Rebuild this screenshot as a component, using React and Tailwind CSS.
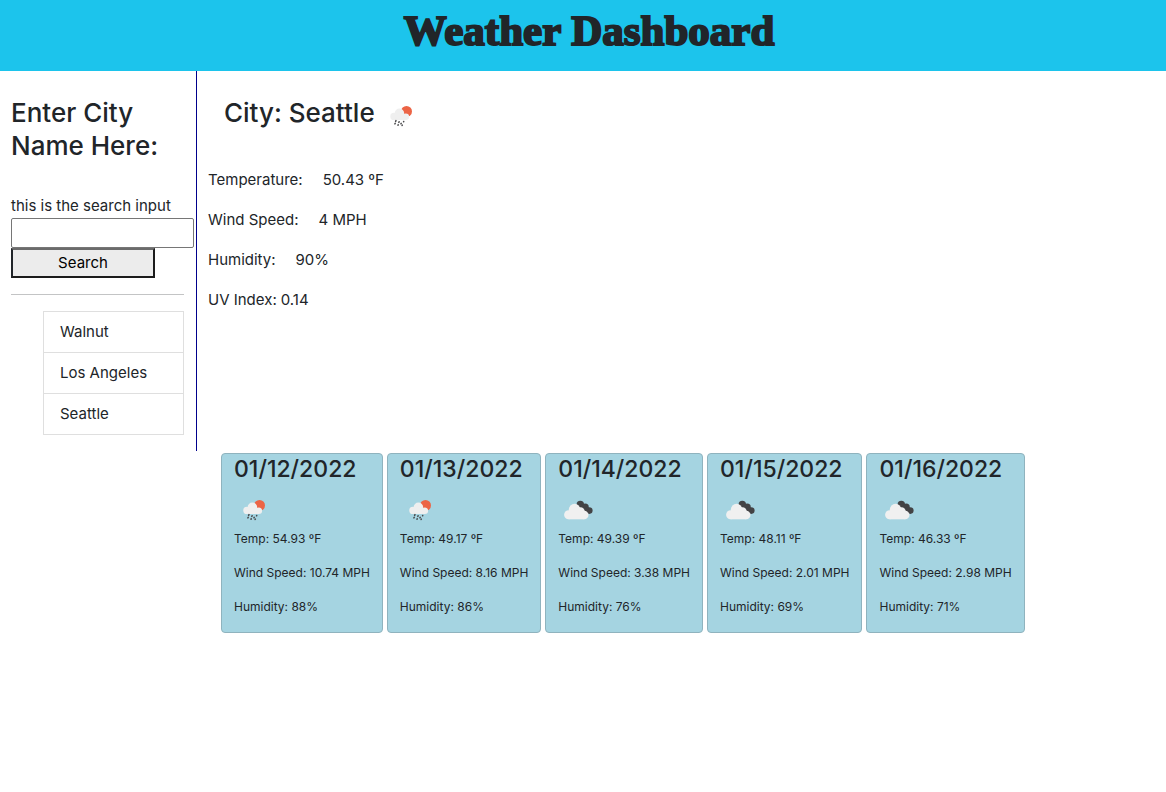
const history = ["Walnut", "Los Angeles", "Seattle"];

const current = [
  ["Temperature:", "50.43 ºF"],
  ["Wind Speed:", "4 MPH"],
  ["Humidity:", "90%"],
];

const forecast = [
  { date: "01/12/2022", icon: "rain", temp: "54.93", wind: "10.74", humidity: 88 },
  { date: "01/13/2022", icon: "rain", temp: "49.17", wind: "8.16", humidity: 86 },
  { date: "01/14/2022", icon: "clouds", temp: "49.39", wind: "3.38", humidity: 76 },
  { date: "01/15/2022", icon: "clouds", temp: "48.11", wind: "2.01", humidity: 69 },
  { date: "01/16/2022", icon: "clouds", temp: "46.33", wind: "2.98", humidity: 71 },
];

function RainIcon() {
  return (
    <svg viewBox="0 0 40 40" className="size-10 shrink-0" role="img" aria-label="Rain with sun">
      <circle cx="25.5" cy="15.4" r="5.5" fill="#ec6445" />
      <g fill="#efefef">
        <circle cx="12.9" cy="20.4" r="3.6" />
        <circle cx="18.4" cy="17.4" r="4.8" />
        <circle cx="24.8" cy="20.8" r="3.3" />
        <rect x="12.9" y="18" width="12" height="6" />
      </g>
      <g stroke="#48484a" strokeWidth="1.5" strokeLinecap="round">
        <path d="M15 24.6l-.4.8M14.2 27.4l-.3.5M18.1 25.7l-.3.7M17.2 28.9l-.2.2M20.2 27.3l-.3.5M22.7 25.5l-.1.3M21.3 29.1l-.2.4" />
      </g>
    </svg>
  );
}

function CloudsIcon() {
  return (
    <svg viewBox="0 0 40 40" className="size-10 shrink-0" role="img" aria-label="Broken clouds">
      <g fill="#434345">
        <circle cx="22.3" cy="14.5" r="3.7" />
        <circle cx="27.2" cy="17.2" r="3.6" />
        <circle cx="31.3" cy="20.6" r="3.3" />
        <path d="M22 17.5l7 5.5h3l-2-6z" />
      </g>
      <g fill="#f0f0f0">
        <circle cx="10.6" cy="24.8" r="4.5" />
        <circle cx="16.6" cy="19.6" r="5.8" />
        <circle cx="22.4" cy="21.6" r="4.4" />
        <circle cx="26.2" cy="25" r="4.3" />
        <rect x="10.6" y="21" width="15.6" height="8.3" />
      </g>
    </svg>
  );
}

function Sidebar() {
  return (
    <aside className="w-[197px] shrink-0 border-r border-[#00008b] pt-[25px] pr-3 pb-4 pl-[11px]">
      <h3 className="mb-8 text-[26px] leading-[33px] font-medium">Enter City Name Here:</h3>
      <label htmlFor="city" className="block whitespace-nowrap">
        this is the search input
      </label>
      <input
        id="city"
        type="text"
        className="block h-[30px] w-[183px] rounded-[2px] border border-[#767676] bg-white px-1"
      />
      <button
        type="button"
        className="block h-[30px] w-36 border-2 border-t-[#6b6b6b] border-r-[#1c1c1c] border-b-[#1c1c1c] border-l-[#212529] bg-[#ececec] text-center text-black"
      >
        Search
      </button>
      <hr className="my-4 border-[#c3c4c5]" />
      <ul className="ml-8 border border-[#dfdfdf]">
        {history.map((city) => (
          <li key={city} className="border-b border-[#dfdfdf] px-4 py-2 last:border-b-0">
            {city}
          </li>
        ))}
      </ul>
    </aside>
  );
}

function CurrentWeather() {
  return (
    <section className="min-w-0 flex-1 pt-[25px] pl-[11px]">
      <div className="mb-8 flex gap-[6px] pl-4">
        <h3 className="text-[26px] leading-[33px] font-medium">City: Seattle</h3>
        <RainIcon />
      </div>
      <dl>
        {current.map(([name, value]) => (
          <div key={name} className="mb-4 flex gap-5">
            <dt>{name}</dt>
            <dd>{value}</dd>
          </div>
        ))}
        <div className="mb-4 flex gap-1">
          <dt>UV Index:</dt>
          <dd>0.14</dd>
        </div>
      </dl>
    </section>
  );
}

function ForecastCard({ day }) {
  return (
    <article className="rounded border border-[#8fb3be] bg-[#a5d4e1] px-3 text-[12px] leading-[18px] whitespace-nowrap">
      <h4 className="mb-1.5 text-[23px] leading-[30px] font-medium">{day.date}</h4>
      {day.icon === "rain" ? <RainIcon /> : <CloudsIcon />}
      <p className="mb-4">Temp: {day.temp} ºF</p>
      <p className="mb-4">Wind Speed: {day.wind} MPH</p>
      <p className="mb-4">Humidity: {day.humidity}%</p>
    </article>
  );
}

export default function App() {
  return (
    <div className="min-h-screen bg-white font-['Inter',sans-serif] text-[15px] leading-6 text-[#212529]">
      <header className="bg-[#1cc4ec] pt-[7px] pb-4 pl-3 text-center">
        <h1 className="font-['Liberation_Serif',serif] text-[43px] leading-[48px] font-bold [-webkit-text-stroke:2px_#212529]">
          Weather Dashboard
        </h1>
      </header>
      <div className="flex">
        <Sidebar />
        <CurrentWeather />
      </div>
      <section aria-label="Five day forecast" className="flex flex-wrap gap-1 pt-0.5 pl-[221px]">
        {forecast.map((day) => (
          <ForecastCard key={day.date} day={day} />
        ))}
      </section>
    </div>
  );
}
